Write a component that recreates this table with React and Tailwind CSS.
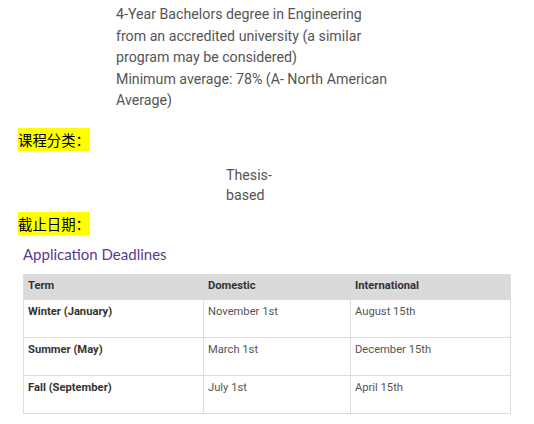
import React from "react";

const rows = [
  ["Winter (January)", "November 1st", "August 15th"],
  ["Summer (May)", "March 1st", "December 15th"],
  ["Fall (September)", "July 1st", "April 15th"],
];

export default function App() {
  return (
    <div className="bg-white w-[534px] h-[424px] overflow-hidden font-['Roboto',sans-serif]">
      {/* Admission requirements */}
      <div className="pl-[116px] pt-[4px] text-[14.2px] leading-[21.5px] text-[#555]">
        <p>4-Year Bachelors degree in Engineering</p>
        <p>from an accredited university (a similar</p>
        <p>program may be considered)</p>
        <p>Minimum average: 78% (A- North American</p>
        <p>Average)</p>
      </div>

      {/* 课程分类 */}
      <div className="mt-[16px] ml-[18px] w-fit h-[23px] bg-[#ffff00] text-black text-[14.4px] leading-[23px] font-['Noto_Sans_CJK_SC',sans-serif]">
        课程分类：
      </div>
      <div className="pl-[226px] mt-[14px] text-[14.2px] leading-[20.5px] text-[#555]">
        <p>Thesis-</p>
        <p>based</p>
      </div>

      {/* 截止日期 */}
      <div className="mt-[6px] ml-[18px] w-fit h-[23px] bg-[#ffff00] text-black text-[14.4px] leading-[23px] font-['Noto_Sans_CJK_SC',sans-serif]">
        截止日期：
      </div>

      <h2 className="ml-[23px] mt-[9px] h-[20px] text-[15px] leading-[20px] text-[#5b3796] font-['Lato',sans-serif]">
        Application Deadlines
      </h2>

      <table className="ml-[23px] mt-[10px] w-[487px] border-collapse text-[11.2px] text-[#555] table-fixed">
        <colgroup>
          <col className="w-[180px]" />
          <col className="w-[147px]" />
          <col className="w-[160px]" />
        </colgroup>
        <thead>
          <tr className="bg-[#dadada] h-[25px]">
            <th className="border border-[#dcdcdc] text-left font-bold px-[4px] text-[#333]">Term</th>
            <th className="border border-[#dcdcdc] text-left font-bold px-[4px] text-[#333]">Domestic</th>
            <th className="border border-[#dcdcdc] text-left font-bold px-[4px] text-[#333]">International</th>
          </tr>
        </thead>
        <tbody>
          {rows.map((r) => (
            <tr key={r[0]} className="h-[38px]">
              <td className="border border-[#dcdcdc] align-top px-[4px] pt-[4px] font-bold text-[#333]">{r[0]}</td>
              <td className="border border-[#dcdcdc] align-top px-[4px] pt-[4px]">{r[1]}</td>
              <td className="border border-[#dcdcdc] align-top px-[4px] pt-[4px]">{r[2]}</td>
            </tr>
          ))}
        </tbody>
      </table>
    </div>
  );
}
